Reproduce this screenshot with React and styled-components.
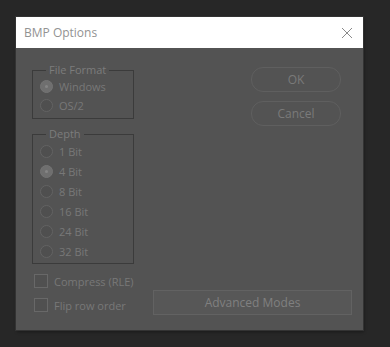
import React from 'react'
import styled, { createGlobalStyle, css } from 'styled-components';

const GlobalStyle = createGlobalStyle`
    html, body {
        margin: 0;
        padding: 0;
        background: #272727;
    }
    body {
        font-family: "Open Sans", "Noto Sans", "Liberation Sans", sans-serif;
    }
`;

const PageStyle = styled.div`
    width: 390px;
    height: 347px;
    padding: 17px 0 0 16px;
    box-sizing: border-box;
`;
const DialogStyle = styled.div`
    width: 347px;
    height: 313px;
    background: #535353;
    display: flex;
    flex-direction: column;
    box-shadow: 0 0 0 1px #333, 1px 2px 3px rgba(0, 0, 0, 0.35);
`;
const TitleBarStyle = styled.div`
    height: 31px;
    background: #fff;
    display: flex;
    align-items: center;
    justify-content: space-between;
    padding: 0 10px 0 8px;
    flex-shrink: 0;
`;
const TitleStyle = styled.div`
    font-size: 12px;
    color: #929292;
`;
const CloseStyle = styled.div`
    width: 12px;
    height: 12px;
    display: flex;
`;
const BodyStyle = styled.div`
    flex: 1;
    display: grid;
    grid-template-columns: 102px 199px;
    column-gap: 19px;
    padding: 15px 11px 11px 16px;
`;
const ColumnStyle = styled.div`
    display: flex;
    flex-direction: column;
    ${({right}) => right && css`
        align-items: flex-end;
    `}
`;
const GroupStyle = styled.fieldset`
    margin: 0;
    padding: 0 6px ${({bottom}) => bottom}px 7px;
    border: 1px solid #3b3b3b;
    min-width: 0;
    & + & {
        margin-top: 8px;
    }
`;
const LegendStyle = styled.legend`
    font-size: 11px;
    line-height: 14px;
    color: #7c7c7c;
    padding: 0 3px;
    margin-left: 6px;
`;
const OptionStyle = styled.div`
    height: ${({h}) => h}px;
    display: flex;
    align-items: center;
    gap: 6px;
    font-size: 11px;
    color: #787878;
`;
const RadioStyle = styled.span`
    width: 11px;
    height: 11px;
    border-radius: 50%;
    border: 1px solid #636363;
    background: #4f4f4f;
    display: flex;
    align-items: center;
    justify-content: center;
    ${({checked}) => checked && css`
        background: #6f6f6f;
        border-color: #747474;
        &::after {
            content: '';
            width: 3px;
            height: 3px;
            border-radius: 50%;
            background: #858585;
        }
    `}
`;
const CheckRowStyle = styled.div`
    height: 24px;
    display: flex;
    align-items: center;
    gap: 6px;
    padding-left: 2px;
    font-size: 11px;
    color: #787878;
    white-space: nowrap;
    &:first-of-type {
        margin-top: 5px;
    }
`;
const CheckBoxStyle = styled.span`
    width: 12px;
    height: 12px;
    border: 1px solid #686868;
    background: #505050;
    flex-shrink: 0;
`;
const PillButtonStyle = styled.div`
    width: 88px;
    height: 23px;
    border: 1px solid #5f5f5f;
    border-radius: 12px;
    display: flex;
    align-items: center;
    justify-content: center;
    font-size: 12px;
    color: #7a7a7a;
    margin-right: 11px;
    margin-top: ${({top}) => top}px;
`;
const WideButtonStyle = styled.div`
    width: 197px;
    height: 23px;
    border: 1px solid #626262;
    background: #575757;
    display: flex;
    align-items: center;
    justify-content: center;
    font-size: 12px;
    color: #808080;
    margin-top: auto;
    margin-bottom: 4px;
`;

const depths = ['1 Bit', '4 Bit', '8 Bit', '16 Bit', '24 Bit', '32 Bit'];

const App = () => {
    return (
        <PageStyle>
            <GlobalStyle/>
            <DialogStyle>
                <TitleBarStyle>
                    <TitleStyle>BMP Options</TitleStyle>
                    <CloseStyle>
                        <svg width="12" height="12" viewBox="0 0 12 12">
                            <path d="M1 1L11 11M11 1L1 11" stroke="#8a8a8a" strokeWidth="1"/>
                        </svg>
                    </CloseStyle>
                </TitleBarStyle>
                <BodyStyle>
                    <ColumnStyle>
                        <GroupStyle bottom={3}>
                            <LegendStyle>File Format</LegendStyle>
                            <OptionStyle h={19}><RadioStyle checked/>Windows</OptionStyle>
                            <OptionStyle h={19}><RadioStyle/>OS/2</OptionStyle>
                        </GroupStyle>
                        <GroupStyle bottom={2}>
                            <LegendStyle>Depth</LegendStyle>
                            {depths.map(d => (
                                <OptionStyle h={20} key={d}>
                                    <RadioStyle checked={d === '4 Bit'}/>{d}
                                </OptionStyle>
                            ))}
                        </GroupStyle>
                        <CheckRowStyle><CheckBoxStyle/>Compress (RLE)</CheckRowStyle>
                        <CheckRowStyle><CheckBoxStyle/>Flip row order</CheckRowStyle>
                    </ColumnStyle>
                    <ColumnStyle right>
                        <PillButtonStyle top={4}>OK</PillButtonStyle>
                        <PillButtonStyle top={9}>Cancel</PillButtonStyle>
                        <WideButtonStyle>Advanced Modes</WideButtonStyle>
                    </ColumnStyle>
                </BodyStyle>
            </DialogStyle>
        </PageStyle>
    )
}

export default App;
